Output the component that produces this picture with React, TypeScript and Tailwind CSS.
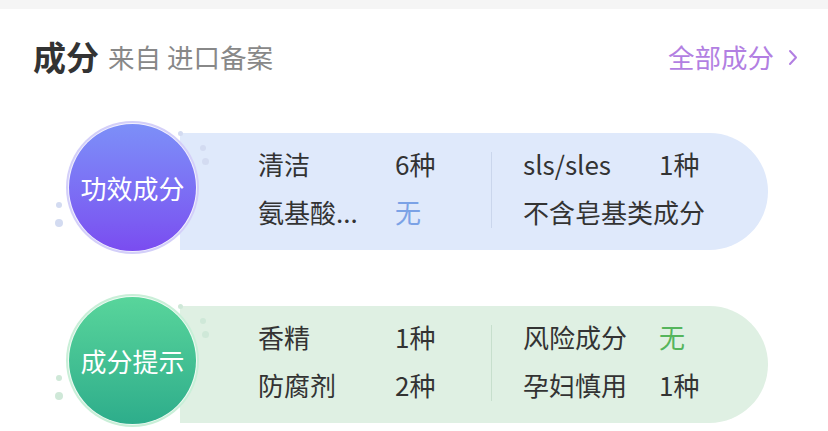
import React from 'react';

type Item = { label: string; value: string; tone?: 'blue' | 'green' };

interface Panel {
  title: string;
  ring: string;
  circle: string;
  pill: string;
  dot: string;
  divider: string;
  left: Item[];
  right: Item[];
}

const panels: Panel[] = [
  {
    title: '功效成分',
    ring: 'bg-[#d3cff9]',
    circle: 'bg-gradient-to-b from-[#7c8ff8] to-[#7a4cf0]',
    pill: 'bg-[#dfe9fb]',
    dot: 'bg-[#d3dbf1]',
    divider: 'bg-[#cad6ec]',
    left: [
      { label: '清洁', value: '6种' },
      { label: '氨基酸...', value: '无', tone: 'blue' },
    ],
    right: [
      { label: 'sls/sles', value: '1种' },
      { label: '不含皂基类成分', value: '' },
    ],
  },
  {
    title: '成分提示',
    ring: 'bg-[#c9efd8]',
    circle: 'bg-gradient-to-b from-[#58d59b] to-[#2dad8b]',
    pill: 'bg-[#dff0e3]',
    dot: 'bg-[#cfe8d8]',
    divider: 'bg-[#c7dfcd]',
    left: [
      { label: '香精', value: '1种' },
      { label: '防腐剂', value: '2种' },
    ],
    right: [
      { label: '风险成分', value: '无', tone: 'green' },
      { label: '孕妇慎用', value: '1种' },
    ],
  },
];

const toneClass = {
  blue: 'text-[#7ba2e6]',
  green: 'text-[#55b55c]',
};

function Row({ item, labelWidth }: { item: Item; labelWidth: string }) {
  return (
    <div className="flex h-[48px] items-center">
      <span className={`${labelWidth} shrink-0 whitespace-nowrap`}>{item.label}</span>
      {item.value && (
        <span className={item.tone ? toneClass[item.tone] : ''}>{item.value}</span>
      )}
    </div>
  );
}

function PanelRow({ panel }: { panel: Panel }) {
  return (
    <div className="flex items-start pl-[66px]">
      <div className="relative z-10 shrink-0">
        <span className={`absolute left-[112px] top-[10px] h-[5px] w-[5px] rounded-full ${panel.dot}`} />
        <span className={`absolute left-[134px] top-[24px] h-[6px] w-[6px] rounded-full ${panel.dot}`} />
        <span className={`absolute left-[136px] top-[37px] h-[7px] w-[7px] rounded-full ${panel.dot}`} />
        <span className={`absolute left-[-10px] top-[81px] h-[6px] w-[6px] rounded-full ${panel.dot}`} />
        <span className={`absolute left-[-11px] top-[98px] h-[8px] w-[8px] rounded-full ${panel.dot}`} />
        <div className={`h-[133px] w-[133px] rounded-full p-[2px] ${panel.ring}`}>
          <div className="h-full w-full rounded-full bg-white/70 p-[1px]">
            <div
              className={`flex h-full w-full items-center justify-center rounded-full text-[26px] text-white ${panel.circle}`}
            >
              {panel.title}
            </div>
          </div>
        </div>
      </div>
      <div
        className={`-ml-[19px] mt-[12px] flex h-[117px] w-[588px] items-start rounded-r-full pl-[78px] pt-[6px] text-[26px] text-[#333] ${panel.pill}`}
      >
        <div className="w-[233px]">
          {panel.left.map((it) => (
            <Row key={it.label} item={it} labelWidth="w-[137px]" />
          ))}
        </div>
        <div className={`mt-[13px] h-[76px] w-px ${panel.divider}`} />
        <div className="pl-[31px]">
          {panel.right.map((it) => (
            <Row key={it.label} item={it} labelWidth="w-[136px]" />
          ))}
        </div>
      </div>
    </div>
  );
}

export default function App() {
  return (
    <div
      className="h-[431px] w-[828px] overflow-hidden bg-white"
      style={{ fontFamily: '"Noto Sans CJK SC", "Noto Sans", sans-serif' }}
    >
      <div className="h-[9px] bg-[#f5f5f5]" />
      <div className="flex h-[96px] items-center justify-between pl-[33px] pr-[30px]">
        <div className="flex items-center">
          <span className="text-[33px] font-bold text-[#333]">成分</span>
          <span className="ml-[9px] text-[26.5px] text-[#888]">来自 进口备案</span>
        </div>
        <div className="flex items-center gap-[14px] text-[26.5px] text-[#b27fe2]">
          <span>全部成分</span>
          <svg width="10" height="17" viewBox="0 0 10 17" fill="none">
            <path d="M2 2l6 6.5L2 15" stroke="#b27fe2" strokeWidth="2" strokeLinecap="round" strokeLinejoin="round" />
          </svg>
        </div>
      </div>
      <div className="mt-[16px] flex flex-col gap-[40px]">
        {panels.map((p) => (
          <PanelRow key={p.title} panel={p} />
        ))}
      </div>
    </div>
  );
}
